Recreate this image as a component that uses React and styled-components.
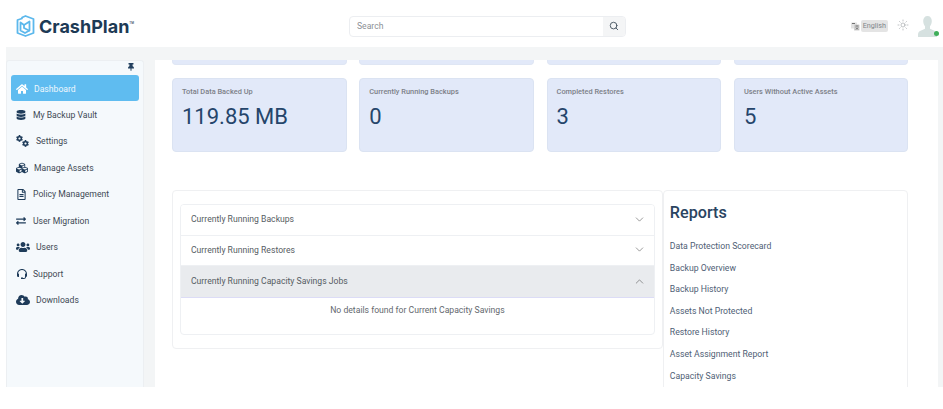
import React from 'react';
import styled, { createGlobalStyle } from 'styled-components';
import {
  FaHome,
  FaDatabase,
  FaCog,
  FaCubes,
  FaRegFileAlt,
  FaExchangeAlt,
  FaUsers,
  FaCloudDownloadAlt,
  FaThumbtack,
} from 'react-icons/fa';
import { BiSupport } from 'react-icons/bi';
import { ChevronDown, ChevronUp, Search, Sun } from 'lucide-react';

const GlobalStyle = createGlobalStyle`
  html, body { margin: 0; padding: 0; background: #fff; }
  body { font-family: Roboto, "Liberation Sans", sans-serif; }
  * { box-sizing: border-box; }
`;

const Screen = styled.div`
  width: 943px;
  height: 387px;
  padding-left: 6px;
  display: flex;
  flex-direction: column;
  overflow: hidden;
`;

/* Header */
const Header = styled.header`
  flex: 0 0 47px;
  display: flex;
  align-items: center;
  background: #fff;
  margin-left: -6px;
  padding-top: 5px;
`;

const LogoBox = styled.div`
  width: 349px;
  padding-left: 16px;
  display: flex;
  align-items: center;
  gap: 4px;
`;

const LogoText = styled.span`
  font-family: Inter, Roboto, sans-serif;
  font-size: 18px;
  font-weight: 700;
  color: #1d3a55;
`;

const LogoMark = styled.sup`
  font-size: 3px;
  font-weight: 500;
  vertical-align: 9px;
  line-height: 0;
`;

const SearchBox = styled.div`
  width: 277px;
  height: 21px;
  display: flex;
  border: 1px solid #eceef1;
  border-radius: 4px;
  overflow: hidden;
`;

const SearchInput = styled.div`
  flex: 1;
  padding-left: 7px;
  font-size: 8.6px;
  line-height: 19px;
  color: #8c9096;
`;

const SearchButton = styled.div`
  width: 22px;
  display: flex;
  align-items: center;
  justify-content: center;
  background: #f4f5f6;
  color: #44525f;
`;

const HeaderRight = styled.div`
  margin-left: auto;
  display: flex;
  align-items: center;
`;

const LangIcon = styled.span`
  display: flex;
  margin-right: 1px;
`;

const LangBadge = styled.span`
  background: #e4e4e4;
  border-radius: 2px;
  padding: 0 2px;
  font-size: 7.2px;
  line-height: 12px;
  color: #80858a;
`;

const SunWrap = styled.span`
  display: flex;
  margin: -2px 9px 0 9px;
  color: #8e9296;
`;

const Avatar = styled.span`
  position: relative;
  display: flex;
  width: 19px;
  height: 21px;
  margin-right: 6px;
`;

const OnlineDot = styled.span`
  position: absolute;
  right: -2px;
  bottom: 1px;
  width: 5px;
  height: 5px;
  border-radius: 50%;
  background: #3fae5a;
`;

/* Body */
const Body = styled.div`
  flex: 1;
  min-height: 0;
  display: flex;
  background: #f3f5f6;
  padding: 13px 5px 0 0;
  gap: 11px;
`;

const Sidebar = styled.nav`
  width: 138px;
  flex: none;
  background: #f5f9fc;
  border: 1px solid #eceff2;
  border-bottom: 0;
  border-radius: 3px 3px 0 0;
  padding: 0 4px;
`;

const Pin = styled.span`
  display: flex;
  justify-content: flex-end;
  height: 14px;
  padding: 2px 4px 0 0;
  color: #22405f;
  font-size: 8px;
`;

const NavItem = styled.a`
  height: 26px;
  margin-bottom: 0.45px;
  display: flex;
  align-items: center;
  padding: 1px 0 0 5px;
  border-radius: 3px;
  font-size: 8.65px;
  color: ${({ $active }) => ($active ? '#eef7fd' : '#3f4a55')};
  background: ${({ $active }) => ($active ? '#5fbcf0' : 'transparent')};
`;

const NavIcon = styled.span`
  flex: none;
  display: flex;
  align-items: center;
  width: ${({ $offset }) => $offset}px;
  font-size: ${({ $size }) => $size}px;
  color: ${({ $active }) => ($active ? '#fff' : '#1f3c5a')};
`;

const CogPair = styled.span`
  display: flex;
  flex-direction: column;
  width: 14px;
  svg { font-size: 7px; margin-bottom: -2px; }
  svg:last-child { font-size: 7px; margin: 0 0 0 6px; }
`;

const Main = styled.main`
  flex: 1;
  min-width: 0;
  background: #fff;
  padding: 0 30px 0 17px;
`;

const CardRow = styled.div`
  display: grid;
  grid-template-columns: repeat(4, 174.5px);
  column-gap: 12.8px;
`;

const StubRow = styled(CardRow)`
  height: 5px;
  margin-bottom: 13px;
`;

const Stub = styled.div`
  background: #e2e9f9;
  border: 1px solid #dfe6f4;
  border-top: 0;
  border-radius: 0 0 4px 4px;
`;

const Card = styled.div`
  height: 74px;
  padding: 8px 9px;
  background: #e2e9f9;
  border: 1px solid #dbe3f2;
  border-radius: 4px;
`;

const CardLabel = styled.div`
  font-size: 7.4px;
  font-weight: 500;
  line-height: 10px;
  color: #7c8088;
`;

const CardValue = styled.div`
  margin-top: 6px;
  font-size: 22px;
  line-height: 28px;
  color: #25456b;
`;

const Lower = styled.div`
  display: flex;
  align-items: flex-start;
  margin-top: 38px;
`;

const JobsPanel = styled.section`
  width: 491.5px;
  height: 159px;
  padding: 13px 7px;
  border: 1px solid #eff0f2;
  border-radius: 4px;
`;

const Accordion = styled.div`
  border: 1px solid #eef0f3;
  border-radius: 4px;
  overflow: hidden;
`;

const AccordionHead = styled.div`
  height: ${({ $open }) => ($open ? '32px' : '30.5px')};
  display: flex;
  align-items: center;
  justify-content: space-between;
  padding: 0 8px 1px 10px;
  font-size: 8.65px;
  color: #565c63;
  background: ${({ $open }) => ($open ? '#e9ebee' : '#fff')};
  border-bottom: 1px solid ${({ $open }) => ($open ? '#dcdcf6' : '#eef0f3')};
`;

const AccordionBody = styled.div`
  height: 36px;
  padding-top: 6px;
  text-align: center;
  font-size: 8.65px;
  line-height: 13px;
  color: #63686e;
`;

const ReportsPanel = styled.aside`
  width: 245px;
  margin-left: 0.5px;
  height: 260px;
  padding: 12px 5.5px;
  border: 1px solid #eff0f2;
  border-radius: 4px;
`;

const ReportsTitle = styled.h2`
  margin: 0 0 16px;
  font-size: 16.2px;
  font-weight: 500;
  line-height: 20px;
  color: #2a4461;
`;

const ReportLink = styled.a`
  display: block;
  height: 21.6px;
  font-size: 8.7px;
  line-height: 14px;
  color: #4f6075;
`;

const Foot = styled.div`
  height: 22px;
  background: #fff;
`;

const navItems = [
  { label: 'Dashboard', icon: <FaHome />, offset: 18, size: 12, active: true },
  { label: 'My Backup Vault', icon: <FaDatabase />, offset: 17, size: 10 },
  {
    label: 'Settings',
    icon: <CogPair><FaCog /><FaCog /></CogPair>,
    offset: 20,
    size: 7,
  },
  { label: 'Manage Assets', icon: <FaCubes />, offset: 18, size: 12 },
  { label: 'Policy Management', icon: <FaRegFileAlt />, offset: 17, size: 11 },
  { label: 'User Migration', icon: <FaExchangeAlt />, offset: 17, size: 10 },
  { label: 'Users', icon: <FaUsers />, offset: 20, size: 14 },
  { label: 'Support', icon: <BiSupport />, offset: 17, size: 12 },
  { label: 'Downloads', icon: <FaCloudDownloadAlt />, offset: 20, size: 14 },
];

const cards = [
  { label: 'Total Data Backed Up', value: '119.85 MB' },
  { label: 'Currently Running Backups', value: '0' },
  { label: 'Completed Restores', value: '3' },
  { label: 'Users Without Active Assets', value: '5' },
];

const reports = [
  'Data Protection Scorecard',
  'Backup Overview',
  'Backup History',
  'Assets Not Protected',
  'Restore History',
  'Asset Assignment Report',
  'Capacity Savings',
];

function Logo() {
  return (
    <svg width="19" height="22" viewBox="0 0 19 22" fill="none" stroke="#5cb8ec" strokeWidth="1.8" strokeLinejoin="round" strokeLinecap="round">
      <path d="M6 2.500 9.500 1 17.500 4v14l-8 3-8-3V5l4.500-1.500" />
      <path d="M4.500 7.500 8 10 13.500 6.500v9L9 18 4.500 15.500z" />
      <path d="M8 10 8 13 13 15.500" />
    </svg>
  );
}

function LangGlyph() {
  return (
    <svg width="9" height="9" viewBox="0 0 9 9">
      <rect x="0" y="0.500" width="6" height="6" rx="0.500" fill="#e2e2e2" />
      <rect x="3" y="2.500" width="5.500" height="6" rx="0.500" fill="#d0d0d0" />
      <path d="M1 1.500h3M4.500 4h3M5 5.500l2 2M7 5.500l-2 2" stroke="#555" strokeWidth="0.800" />
    </svg>
  );
}

function UserSilhouette() {
  return (
    <svg width="19" height="21" viewBox="0 0 19 21" fill="#d6e1e0">
      <path d="M9.500 0C12.200 0 13.800 2 13.800 5c0 2.200-.8 4.200-1.800 5.300v2.400l5 2.300c1 .5 2 1.500 2 3.500v2.500H0V18.500c0-2 1-3 2-3.500l5-2.300V10.300C6 9.200 5.200 7.200 5.200 5 5.200 2 6.800 0 9.500 0z" />
    </svg>
  );
}

export default function App() {
  return (
    <>
      <GlobalStyle />
      <Screen>
        <Header>
          <LogoBox>
            <Logo />
            <LogoText>CrashPlan<LogoMark>TM</LogoMark></LogoText>
          </LogoBox>
          <SearchBox>
            <SearchInput>Search</SearchInput>
            <SearchButton><Search size={10} strokeWidth={2.2} /></SearchButton>
          </SearchBox>
          <HeaderRight>
            <LangIcon><LangGlyph /></LangIcon>
            <LangBadge>English</LangBadge>
            <SunWrap><Sun size={12} strokeWidth={1.1} /></SunWrap>
            <Avatar>
              <UserSilhouette />
              <OnlineDot />
            </Avatar>
          </HeaderRight>
        </Header>
        <Body>
          <Sidebar>
            <Pin><FaThumbtack /></Pin>
            {navItems.map((item) => (
              <NavItem key={item.label} $active={item.active}>
                <NavIcon $active={item.active} $offset={item.offset} $size={item.size}>{item.icon}</NavIcon>
                {item.label}
              </NavItem>
            ))}
          </Sidebar>
          <Main>
            <StubRow>
              {cards.map((card) => <Stub key={card.label} />)}
            </StubRow>
            <CardRow>
              {cards.map((card) => (
                <Card key={card.label}>
                  <CardLabel>{card.label}</CardLabel>
                  <CardValue>{card.value}</CardValue>
                </Card>
              ))}
            </CardRow>
            <Lower>
              <JobsPanel>
                <Accordion>
                  <AccordionHead>
                    Currently Running Backups
                    <ChevronDown size={13} strokeWidth={1} color="#444" />
                  </AccordionHead>
                  <AccordionHead>
                    Currently Running Restores
                    <ChevronDown size={13} strokeWidth={1} color="#444" />
                  </AccordionHead>
                  <AccordionHead $open>
                    Currently Running Capacity Savings Jobs
                    <ChevronUp size={13} strokeWidth={1} color="#444" />
                  </AccordionHead>
                  <AccordionBody>No details found for Current Capacity Savings</AccordionBody>
                </Accordion>
              </JobsPanel>
              <ReportsPanel>
                <ReportsTitle>Reports</ReportsTitle>
                {reports.map((report) => <ReportLink key={report}>{report}</ReportLink>)}
              </ReportsPanel>
            </Lower>
          </Main>
        </Body>
      </Screen>
      <Foot />
    </>
  );
}
